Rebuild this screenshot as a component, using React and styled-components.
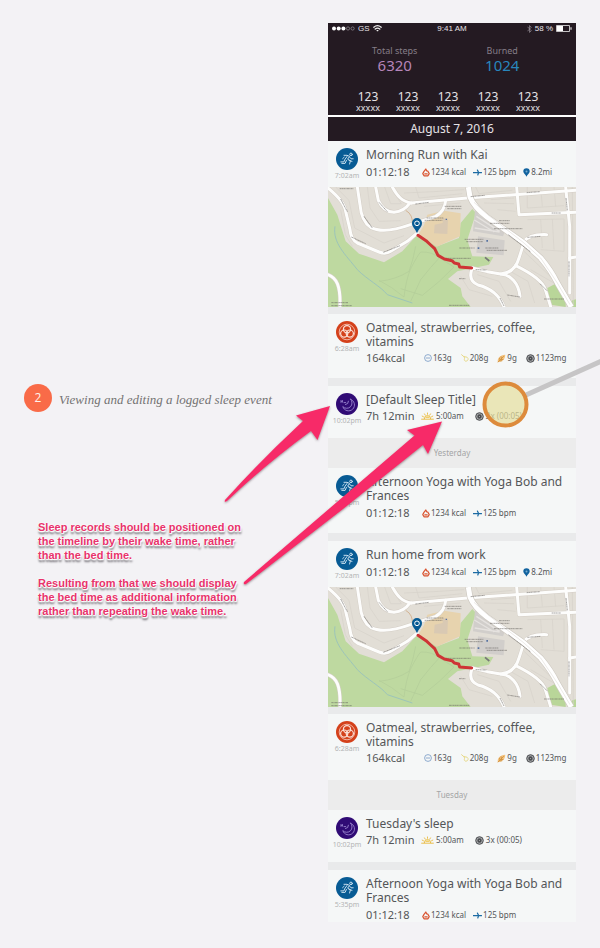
import React from "react";
import styled, { createGlobalStyle } from "styled-components";

const GlobalStyle = createGlobalStyle`
  *, *::before, *::after { box-sizing: border-box; }
  body { margin: 0; background: #f3f2f5; font-family: "Noto Sans", "Open Sans", sans-serif; }
  h2, h3, p, ul, ol { margin: 0; padding: 0; font-weight: 400; }
  ul, ol { list-style: none; }
  svg { display: block; }
`;

const Page = styled.main`
  display: grid;
  grid-template-columns: minmax(0, 1fr) minmax(248px, 43%);
  align-items: start;
  padding: 23px 24px 25px;
  overflow: hidden;
`;

const Notes = styled.section`
  padding-top: 361px;
`;

const StepHeading = styled.div`
  display: flex;
  align-items: center;
  gap: 7px;
`;

const StepNumber = styled.span`
  display: grid;
  place-items: center;
  width: 28px;
  height: 28px;
  border-radius: 50%;
  background: #f96b48;
  color: #fff3ec;
  font: 12px/16px "Open Sans", sans-serif;
`;

const StepTitle = styled.h2`
  padding-top: 4px;
  color: #737273;
  font: italic 13px/16px "Liberation Serif", serif;
  white-space: nowrap;
`;

const Remarks = styled.div`
  display: grid;
  gap: 14px;
  max-width: 224px;
  margin-top: 108px;
  padding-left: 14px;
`;

const Remark = styled.p`
  color: #e8336b;
  font: bold 11px/14px "Liberation Sans", sans-serif;
  text-shadow: 0 0 1px #fff, 0 0 2px #fff, 0 1px 1px #fff, 0 0 2px #fff, 1px 1px 1px #fff,
    0 3px 2px #88858b, 1px 3px 2px #a5a3a8;
`;

const Phone = styled.section`
  position: relative;
  background: #e9eaeb;
`;

const Header = styled.header`
  background: #241a22;
  color: #e6e2e6;
`;

const StatusBar = styled.div`
  display: grid;
  grid-template-columns: 1fr auto 1fr;
  align-items: center;
  height: 11px;
  padding: 0 4px;
  font: 8px/10px "Liberation Sans", sans-serif;
`;

const StatusGroup = styled.div`
  display: flex;
  align-items: center;
  justify-content: ${(p) => (p.$end ? "flex-end" : "flex-start")};
  gap: 3px;
`;

const Totals = styled.div`
  display: grid;
  grid-template-columns: 1fr 1fr;
  padding: 11px 20px 0 13px;
`;

const Total = styled.div`
  text-align: center;
  color: #857d87;
  font-size: 9px;
  line-height: 12px;
`;

const TotalValue = styled.div`
  color: ${(p) => p.$color};
  font-size: 15px;
  line-height: 17px;
`;

const Counters = styled.ul`
  display: grid;
  grid-template-columns: repeat(5, 1fr);
  padding: 16px 28px 3px 20px;
`;

const Counter = styled.li`
  text-align: center;
  font-size: 9px;
  line-height: 9px;
`;

const CounterValue = styled.div`
  font-size: 12px;
  line-height: 13px;
`;

const DateBar = styled.h2`
  height: 26px;
  border-top: 2px solid #fff;
  font-size: 12px;
  line-height: 23px;
  text-align: center;
`;

const Card = styled.article`
  display: grid;
  grid-template-columns: 38px 1fr;
  min-height: ${(p) => p.$height}px;
  margin-bottom: ${(p) => (p.$flush ? 0 : 8)}px;
  padding-top: 7px;
  background: #f5f7f7;
`;

const Marker = styled.div`
  display: grid;
  justify-items: center;
  align-content: start;
  gap: 1px;
  color: #b3b4b5;
  font-size: 7px;
  line-height: 9px;
`;

const Badge = styled.span`
  width: 22px;
  height: 22px;
  border-radius: 50%;
  background: ${(p) => p.$color};
`;

const CardTitle = styled.h3`
  color: #545658;
  font-size: 12px;
  line-height: 14px;
`;

const Stats = styled.div`
  display: grid;
  grid-template-columns: ${(p) => p.$lead}px 1fr;
  align-items: center;
  margin-top: ${(p) => p.$top}px;
  color: #545658;
  font-size: 11px;
  line-height: 14px;
  white-space: nowrap;
`;

const StatList = styled.ul`
  display: flex;
  gap: ${(p) => p.$gap}px;
`;

const Stat = styled.li`
  display: flex;
  align-items: center;
  gap: ${(p) => p.$space}px;
  font-size: 8px;
`;

const MapFrame = styled.div`
  height: 120px;
  margin-bottom: 7px;
`;

const DayDivider = styled.h2`
  height: 30px;
  margin-top: -8px;
  background: #ececec;
  color: #a4a5a6;
  font-size: 8px;
  line-height: 30px;
  text-align: center;
`;

const Overlay = styled.svg`
  position: absolute;
  top: 332px;
  left: -108px;
  pointer-events: none;
`;

const line = { fill: "none", strokeLinecap: "round", strokeLinejoin: "round" };

function RunnerGlyph() {
  return (
    <svg width="22" height="22" viewBox="0 0 22 22" {...line} stroke="#c9dfee" strokeWidth="1">
      <circle cx="15" cy="6.4" r="1.3" />
      <path d="M8 7.3h3l2.6 1.1-2 2.8 2.8 1.6-.8 3.2M11 8.5l-2.4 3.4-.7 2H4.8M10.4 12.4l-1.3 3H5.8M13.8 9.3l1.2 1.5h2.2M8.2 9.2 6.6 10.7M13 12.2l3 1.2" />
    </svg>
  );
}

function MealGlyph() {
  return (
    <svg width="22" height="22" viewBox="0 0 22 22" fill="none" stroke="#fbe1d8" strokeWidth="1.2">
      <circle cx="11" cy="8.2" r="3.6" />
      <circle cx="8.2" cy="12.6" r="3.6" />
      <circle cx="13.8" cy="12.6" r="3.6" />
      <circle cx="11" cy="11" r="7.8" strokeWidth="0.7" />
    </svg>
  );
}

function MoonGlyph() {
  return (
    <svg width="22" height="22" viewBox="0 0 22 22" {...line} stroke="#9a86cf" strokeWidth="0.9">
      <path d="M14.6 6.2a5.2 5.2 0 0 1-7.8 7.4 6 6 0 1 0 7.8-7.4ZM12.5 8.2a3.4 3.4 0 0 1-3 3.4M5 9.4V7.5l1.4 1.8V7.5M8 9.6h1.7" />
    </svg>
  );
}

const statIcons = {
  flame: (
    <svg width="8" height="9" viewBox="0 0 8 9" {...line} stroke="#d9532f" strokeWidth="1.2">
      <path d="M3.8 1 4.8 3l1.1.2 1.3 2.4-1.2 2.2H2L.8 5.6 2 3.4ZM2.8 5.9h2.4" />
    </svg>
  ),
  pulse: (
    <svg width="9" height="9" viewBox="0 0 9 9" {...line} stroke="#1c6ba4" strokeWidth="1.2">
      <path d="M.3 4.6h8.2M4.4 2l1.2 2.6L4.8 7" />
    </svg>
  ),
  pin: (
    <svg width="7" height="9" viewBox="0 0 7 9">
      <path d="M3.5 8.7C2.8 6.7.3 5.5.3 3.5a3.2 3.2 0 0 1 6.4 0c0 2-2.5 3.2-3.2 5.2Z" fill="#12639f" />
      <circle cx="3.5" cy="3.4" r="1" fill="#7cafd0" />
    </svg>
  ),
  carbs: (
    <svg width="8" height="8" viewBox="0 0 8 8" fill="none" stroke="#7398c4" strokeWidth="0.8">
      <circle cx="4" cy="4" r="3.4" />
      <path d="M2 4h4" />
    </svg>
  ),
  fat: (
    <svg width="8" height="8" viewBox="0 0 8 8" {...line} stroke="#e5d77f" strokeWidth="0.9">
      <path d="M.6.7 3 2.8M3 2.8c3-.5 4.5 1.1 4 2.9-.5 1.6-3 2-3.6.6-.5-1.2.7-2 .2-3.5" />
    </svg>
  ),
  protein: (
    <svg width="9" height="9" viewBox="0 0 9 9">
      <path d="M.8 8.2C0 4.6 3 1 8.2.8 8.5 4.8 5.3 8.2.8 8.2Z" fill="#f3c27c" />
      <path d="m.8 8.2 6-6M2.8 5.8l-.3-2M4.4 4.4 4 2.4M4 5.5h2.4M2.8 6.8h2.4" stroke="#c98a3a" strokeWidth="0.8" />
    </svg>
  ),
  target: (
    <svg width="9" height="9" viewBox="0 0 9 9" fill="none" stroke="#4b4d50">
      <circle cx="4.5" cy="4.5" r="3.8" strokeWidth="1" fill="#a8aaac" />
      <circle cx="4.5" cy="4.5" r="1.4" strokeWidth="1.6" />
    </svg>
  ),
  sun: (
    <svg width="13" height="8" viewBox="0 0 13 8" {...line} stroke="#e9b93b" strokeWidth="0.9">
      <path d="M.6 7.2h11.8M3.3 6.7a3.2 3.2 0 0 1 6.4 0M6.5 1v1.3M3.5 1.9l.7 1.2M9.5 1.9l-.7 1.2M1.2 4.1l1.3.7M11.8 4.1l-1.3.7" />
      <path d="M4.2 6a2.4 2.4 0 0 1 4.6 0Z" fill="#f2ce67" stroke="none" />
    </svg>
  ),
};

const kinds = {
  workout: { color: "#075b94", Glyph: RunnerGlyph, lead: 56, gap: 7, space: 1, top: 3 },
  meal: { color: "#d4411b", Glyph: MealGlyph, lead: 58, gap: 9, space: 1, top: 2 },
  sleep: { color: "#300b75", Glyph: MoonGlyph, lead: 55, gap: 11, space: 2, top: 2 },
};

function Entry({ kind, title, time, value, stats, height, flush }) {
  const { color, Glyph, lead, gap, space, top } = kinds[kind];
  return (
    <Card $height={height} $flush={flush}>
      <Marker>
        <Badge $color={color}><Glyph /></Badge>
        <time>{time}</time>
      </Marker>
      <div>
        <CardTitle>{title}</CardTitle>
        <Stats $lead={lead} $top={top}>
          <span>{value}</span>
          <StatList $gap={gap}>
            {stats.map(([icon, text]) => (
              <Stat key={icon} $space={space}>{statIcons[icon]}<span>{text}</span></Stat>
            ))}
          </StatList>
        </Stats>
      </div>
    </Card>
  );
}

const minorRoads = [
  "M12 25C40 48 62 70 65 95L78 150Q80 178 100 190L165 217Q185 225 200 215L250 185 280 160",
  "M100 22 108 75Q112 125 140 143C180 165 245 140 262 134L335 110Q362 95 365 62",
  "M155 22 163 62Q178 96 210 98 240 95 256 72",
  "M205 22C220 50 235 66 262 70",
  "M262 70 430 55 756 32",
  "M578 22 585 105 756 98",
  "M725 22 737 140 737 340",
  "M600 188 585 235Q572 280 530 283L490 276 445 265",
  "M445 265Q430 302 462 316C500 325 525 345 540 381",
  "M530 283C560 285 584 310 588 350",
  "M575 258C610 275 655 300 664 330L680 381",
  "M600 187Q615 163 668 165",
  "M737 235 756 232",
  "M12 285C38 295 50 318 48 381",
];

const lots = [
  "M35 22 75 62 92 145 180 190 240 168", "M50 90 64 165 85 200",
  "M130 22 138 85 165 125 230 123", "M182 22 200 72 232 72 210 40",
  "M275 22 285 55 415 42", "M300 80 410 70", "M240 40 330 36 420 30",
  "M455 22 465 42 565 32", "M500 60 570 55 M480 70 570 72 M520 90 575 95",
  "M610 22 610 85 720 78 M650 22 655 80 M690 22 695 80",
  "M610 120 720 118 720 215 650 210 M650 118 655 205 M685 118 690 210",
  "M600 215 710 320 M620 270 690 310", "M460 285 525 305 560 365",
  "M410 290 435 330 505 350", "M550 270 612 305 632 370", "M745 22 748 380",
];

const labels = [
  "M47 27H88", "M50 58 70 96", "M120 110 145 145", "M82 172 125 192", "M178 218 228 198",
  "M165 68 190 96", "M274 73 315 68", "M440 51 482 47", "M608 39 648 36", "M683 100H710",
  "M362 80H412", "M370 87H412", "M308 115H358", "M302 122H355", "M525 123H558",
  "M498 131H556", "M510 147H595", "M422 179H478", "M427 186H476", "M406 205H452",
  "M484 205H524", "M488 212H550", "M365 236H440", "M610 173 650 170", "M553 165 620 217",
  "M726 55 730 92", "M735 245V290", "M455 270 488 271", "M550 346 588 352",
  "M405 297H424", "M528 355 540 379", "M660 358H720", "M22 369H72", "M22 378H84", "M375 377H437", "M648 312 670 334",
];

function RouteMap() {
  return (
    <MapFrame>
      <svg width="100%" height="120" viewBox="12 22 744 360" preserveAspectRatio="xMidYMid slice" role="img" aria-label="Route map">
        <path d="M12 22h744v360H12z" fill="#e2ded6" />
        <path d="M12 55 40 105 65 185 105 222 180 248 235 215 280 165 340 200 405 175 410 130 445 88 456 100 430 180 445 230 508 232 495 255 400 275 372 298 410 325 415 350 440 382H12Z" fill="#bed9a0" />
        <path d="m310 105 50-12 50 8-2 69-70 31-55-36 17-28Z" fill="#e7d3ae" />
        <path d="m670 325 33-17 22 47v27l-45-7Z" fill="#b9d699" />
        <path d="m735 382 10-20 11-3v23Z" fill="#b9d699" />
        <path d="m332 135 24-5v-15l16 2-2 46-40-2Z" fill="#d9c9b3" />
        <path d="m453 92 92 58-8 20-90-15ZM462 170l80 12-3 45-82-8Z" fill="#d1cecb" />
        <path d="m457 110 70 45m-63-53 65 42m-78-23 60 36M452 145l75 12" stroke="#e5e2df" strokeWidth="4" />
        <g fill="none" stroke="#d7d2ca" strokeWidth="2">{lots.map((d) => <path key={d} d={d} />)}</g>
        <path d="M33 140C25 190 65 225 100 270 130 300 170 320 190 345L265 370" fill="none" stroke="#9cc4ba" strokeWidth="3" />
        <path d="M165 302Q205 322 240 352 246 300 260 267 282 225 290 217 325 215 350 237L390 262Q350 305 295 347L230 327M275 200Q268 240 255 275 215 300 165 305M350 230Q320 262 290 300L260 365" fill="none" stroke="#b2cc99" strokeWidth="2" />
        <g {...line} stroke="#d4cec6" strokeWidth="12">{minorRoads.map((d) => <path key={d} d={d} />)}</g>
        <g {...line} stroke="#fdfdfc" strokeWidth="9">{minorRoads.map((d) => <path key={d} d={d} />)}</g>
        <path d="M433 22 438 52Q450 82 490 113L600 190 650 235Q680 270 700 310L742 382" fill="none" stroke="#cec9c1" strokeWidth="19" />
        <path d="M433 22 438 52Q450 82 490 113L600 190 650 235Q680 270 700 310L742 382" fill="none" stroke="#fff" strokeWidth="15" />
        <path d="M450 68 490 104 600 190 650 235 700 310 738 375" fill="none" stroke="#d8d4ce" strokeWidth="1.5" />
        <path d="M245 92Q268 105 265 135" fill="none" stroke="#d3b493" strokeWidth="3" />
        <g stroke="#625f5b" strokeWidth="2.5" strokeDasharray="6 1 3 1">{labels.map((d) => <path key={d} d={d} fill="none" opacity="0.65" />)}</g>
        <path d="m483 233 13 11" stroke="#777" strokeWidth="5" />
        <path d="M461 203h5v5h-5zM487 181h5v5h-5zM365 117h4v4h-4z" fill="#5572a2" />
        <path d="M282 167 306 183 320 196 332 207 342 227 361 238 384 243 391 250 404 253 407 262 443 265" {...line} stroke="#ce3435" strokeWidth="9" />
        <path d="M279 161C274 146 264 143 264 130a15 15 0 0 1 30 0c0 13-10 16-15 31Z" fill="#075b94" />
        <circle cx="279" cy="131" r="7" fill="#075b94" stroke="#fff" strokeWidth="3" />
      </svg>
    </MapFrame>
  );
}

function SignalIcon() {
  return (
    <svg width="23" height="5" viewBox="0 0 23 5" fill="#fff">
      <circle cx="2" cy="2.5" r="2" /><circle cx="6.7" cy="2.5" r="2" /><circle cx="11.4" cy="2.5" r="2" />
      <g fill="none" stroke="#aaa5aa" strokeWidth="0.6"><circle cx="16" cy="2.5" r="1.6" /><circle cx="20.6" cy="2.5" r="1.6" /></g>
    </svg>
  );
}

function WifiIcon() {
  return (
    <svg width="9" height="7" viewBox="0 0 9 7" {...line} stroke="#eee" strokeWidth="1.3">
      <path d="M.8 2.2Q4.5-.8 8.2 2.2M2.2 4Q4.5 2.2 6.8 4M4.1 5.6h.8" />
    </svg>
  );
}

function BluetoothIcon() {
  return (
    <svg width="5" height="8" viewBox="0 0 5 8" {...line} stroke="#999099" strokeWidth="0.7">
      <path d="m.7 2 3.6 3.8L2.5 7.4V.6l1.8 1.6L.7 6" />
    </svg>
  );
}

function BatteryIcon() {
  return (
    <svg width="16" height="7" viewBox="0 0 16 7">
      <path d="M.5.5h13v6H.5z" fill="none" stroke="#eee" strokeWidth="0.8" />
      <path d="M1 1h6v5H1zM14.5 2.3h1v2.4h-1z" fill="#fff" />
    </svg>
  );
}

const workoutStats = [["flame", "1234 kcal"], ["pulse", "125 bpm"]];
const runStats = [...workoutStats, ["pin", "8.2mi"]];
const mealStats = [["carbs", "163g"], ["fat", "208g"], ["protein", "9g"], ["target", "1123mg"]];
const sleepStats = [["sun", "5:00am"], ["target", "3x (00:05)"]];

function Annotations() {
  return (
    <Overlay width="380" height="240" viewBox="220 355 380 240" aria-hidden="true">
      <defs>
        <filter id="lift" x="-10%" y="-10%" width="120%" height="120%">
          <feDropShadow dx="0" dy="1" stdDeviation="1" floodColor="#55424b" floodOpacity="0.6" />
        </filter>
      </defs>
      <path d="m526 395 80-36" stroke="#c6c5c6" strokeWidth="5" />
      <circle cx="505.5" cy="404.5" r="21" fill="#e6de9c" fillOpacity="0.7" stroke="#dd8b3c" strokeWidth="4" />
      <g fill="#f72b68" filter="url(#lift)">
        <path d="M330 406 296 415.5 303 421Q262 459 225 500Q224 503 227 501Q266 464 311 431L317.5 440Z" />
        <path d="M442 421.5 407 430 414.5 435.5 337 502 244 582Q243 585 246 584L343 509 423 445 428 454Z" />
      </g>
    </Overlay>
  );
}

export default function App() {
  return (
    <>
      <GlobalStyle />
      <Page>
        <Notes>
          <StepHeading>
            <StepNumber>2</StepNumber>
            <StepTitle>Viewing and editing a logged sleep event</StepTitle>
          </StepHeading>
          <Remarks>
            <Remark>Sleep records should be positioned on the timeline by their wake time, rather than the bed time.</Remark>
            <Remark>Resulting from that we should display the bed time as additional information rather than repeating the wake time.</Remark>
          </Remarks>
        </Notes>
        <Phone>
          <Header>
            <StatusBar>
              <StatusGroup><SignalIcon /><span>GS</span><WifiIcon /></StatusGroup>
              <span>9:41 AM</span>
              <StatusGroup $end><BluetoothIcon /><span>58 %</span><BatteryIcon /></StatusGroup>
            </StatusBar>
            <Totals>
              <Total>Total steps<TotalValue $color="#b585b9">6320</TotalValue></Total>
              <Total>Burned<TotalValue $color="#2886bd">1024</TotalValue></Total>
            </Totals>
            <Counters>
              {[1, 2, 3, 4, 5].map((n) => (
                <Counter key={n}><CounterValue>123</CounterValue>xxxxx</Counter>
              ))}
            </Counters>
            <DateBar>August 7, 2016</DateBar>
          </Header>
          <Entry kind="workout" title="Morning Run with Kai" time="7:02am" value="01:12:18" stats={runStats} height={46} flush />
          <RouteMap />
          <Entry kind="meal" title="Oatmeal, strawberries, coffee, vitamins" time="6:28am" value="164kcal" stats={mealStats} height={64} />
          <Entry kind="sleep" title="[Default Sleep Title]" time="10:02pm" value="7h 12min" stats={sleepStats} height={52} />
          <DayDivider>Yesterday</DayDivider>
          <Entry kind="workout" title="Afternoon Yoga with Yoga Bob and Frances" time="5:35pm" value="01:12:18" stats={workoutStats} height={65} />
          <Entry kind="workout" title="Run home from work" time="7:02am" value="01:12:18" stats={runStats} height={46} flush />
          <RouteMap />
          <Entry kind="meal" title="Oatmeal, strawberries, coffee, vitamins" time="6:28am" value="164kcal" stats={mealStats} height={66} />
          <DayDivider>Tuesday</DayDivider>
          <Entry kind="sleep" title="Tuesday's sleep" time="10:02pm" value="7h 12min" stats={sleepStats} height={52} />
          <Entry kind="workout" title="Afternoon Yoga with Yoga Bob and Frances" time="5:35pm" value="01:12:18" stats={workoutStats} height={52} flush />
          <Annotations />
        </Phone>
      </Page>
    </>
  );
}
